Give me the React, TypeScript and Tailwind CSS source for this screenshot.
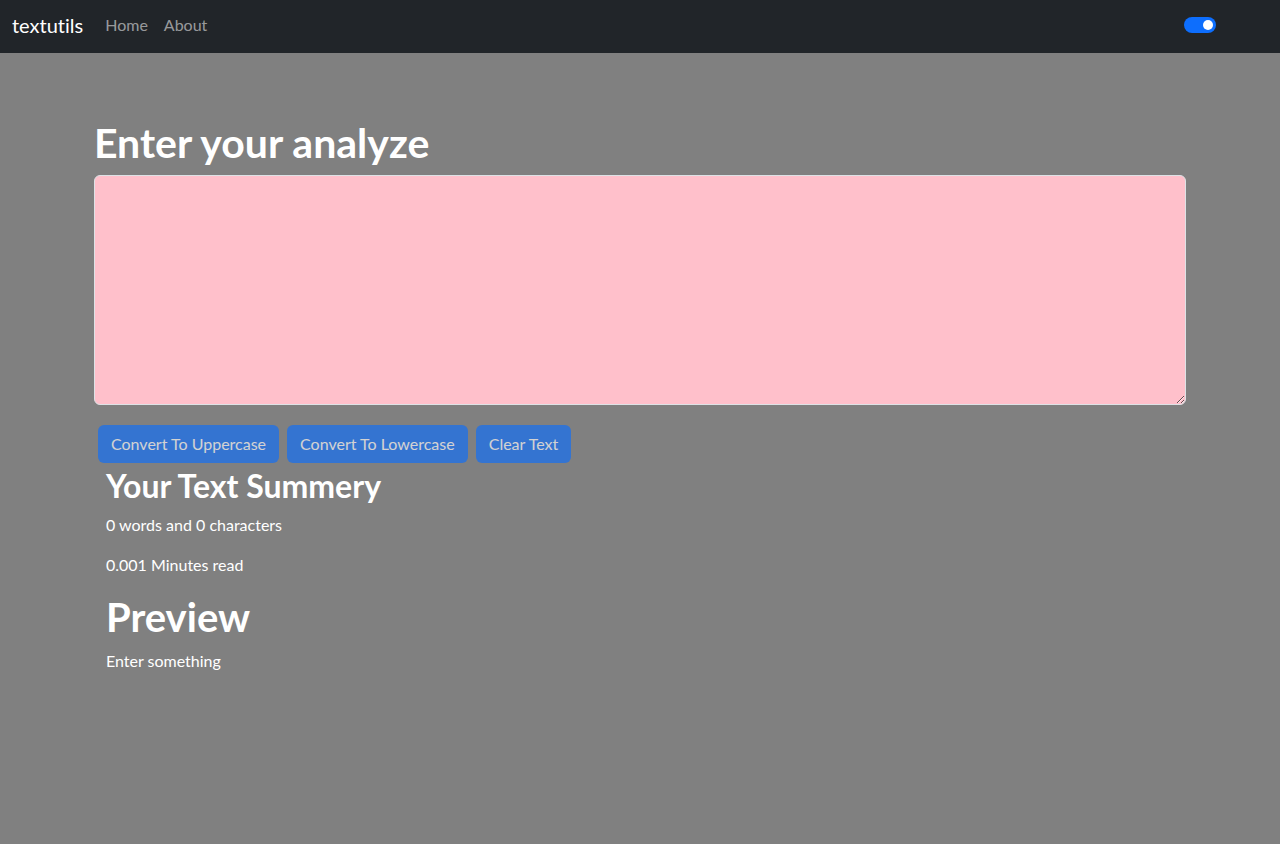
export default function App() {
  const font = { fontFamily: 'Lato, "Noto Sans", sans-serif' };
  const btn = "bg-[#0d6efd] opacity-65 text-white text-[16px] leading-6 px-[13px] h-[38px] rounded-md";
  return (
    <div className="min-h-[844px] bg-[#808080] [font-variant-ligatures:none]" style={font}>
      <nav className="h-[53px] bg-[#212529] flex items-center px-3 pb-[3px]">
        <span className="text-white text-[20px] leading-[30px] mr-[14px]">textutils</span>
        <a className="text-[16px] text-[rgba(255,255,255,0.55)] px-2">Home</a>
        <a className="text-[16px] text-[rgba(255,255,255,0.55)] px-2">About</a>
        <div className="ml-auto mr-[52px] w-8 h-4 rounded-full bg-[#0d6efd] flex items-center justify-end pr-[3px]">
          <div className="w-[10px] h-[10px] rounded-full bg-white" />
        </div>
      </nav>
      <div className="mx-auto w-[1116px] px-3 pt-[66px]">
        <h1 className="text-white text-[41px] leading-[48px] font-bold mb-2">Enter your analyze</h1>
        <textarea
          rows={8}
          className="block w-full h-[230px] bg-[#ffc0cb] border border-[#dee2e6] rounded-md px-3 py-[6px] outline-none"
        />
        <div className="flex gap-2 mt-5 px-1">
          <button className={btn}>Convert To Uppercase</button>
          <button className={btn}>Convert To Lowercase</button>
          <button className={btn}>Clear Text</button>
        </div>
        <div className="px-3 pt-[4px] text-white">
          <h2 className="text-[32px] leading-[38px] font-bold mb-2">Your Text Summery</h2>
          <p className="text-[16px] leading-6 mb-4">0 words and 0 characters</p>
          <p className="text-[16px] leading-6 mb-4">0.001 Minutes read</p>
          <h2 className="text-[40px] leading-[48px] font-bold mb-2">Preview</h2>
          <p className="text-[16px] leading-6">Enter something</p>
        </div>
      </div>
    </div>
  );
}
